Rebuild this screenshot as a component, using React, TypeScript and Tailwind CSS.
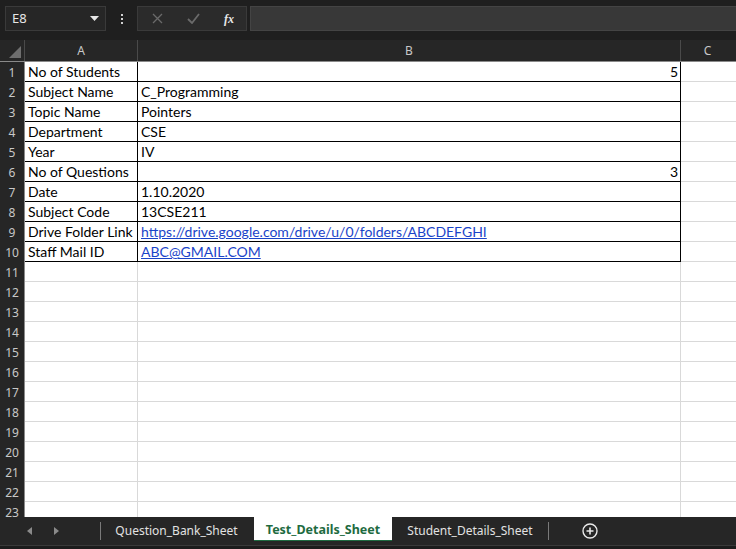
import React from 'react';

type Row = { a?: string; b?: string; num?: boolean; link?: boolean };

const data: Row[] = [
  { a: 'No of Students', b: '5', num: true },
  { a: 'Subject Name', b: 'C_Programming' },
  { a: 'Topic Name', b: 'Pointers' },
  { a: 'Department', b: 'CSE' },
  { a: 'Year', b: 'IV' },
  { a: 'No of Questions', b: '3', num: true },
  { a: 'Date', b: '1.10.2020' },
  { a: 'Subject Code', b: '13CSE211' },
  { a: 'Drive Folder Link', b: 'https://drive.google.com/drive/u/0/folders/ABCDEFGHI', link: true },
  { a: 'Staff Mail ID', b: 'ABC@GMAIL.COM', link: true },
];

const ui = { fontFamily: '"Noto Sans", "Open Sans", sans-serif' };
const cell = { fontFamily: 'Lato, "Noto Sans", sans-serif' };

const TopBar = () => (
  <div className="h-[40px] shrink-0 bg-[#1f1f1f] flex items-start pt-[6px] pl-[5px]">
    {/* name box */}
    <div className="w-[101px] h-[25px] bg-[#262626] border border-[#3a3a3a] flex items-center justify-between pl-[6px] pr-[6px]">
      <span className="text-[13px] text-[#e6e6e6]" style={ui}>E8</span>
      <svg width="9" height="5" viewBox="0 0 9 5"><path d="M0 0h9L4.5 5z" fill="#e6e6e6" /></svg>
    </div>
    {/* dots */}
    <div className="w-[31px] h-[25px] flex flex-col items-center justify-center gap-[2px]">
      <span className="w-[2px] h-[2px] bg-[#d0d0d0]" />
      <span className="w-[2px] h-[2px] bg-[#d0d0d0]" />
      <span className="w-[2px] h-[2px] bg-[#d0d0d0]" />
    </div>
    {/* formula buttons */}
    <div className="w-[110px] h-[25px] bg-[#2b2b2b] border border-[#3a3a3a] flex items-center">
      <div className="w-[37px] flex justify-center pl-[2px]">
        <svg width="11" height="11" viewBox="0 0 11 11"><path d="M1 1l9 9M10 1l-9 9" stroke="#6a6a6a" strokeWidth="1.3" /></svg>
      </div>
      <div className="w-[37px] flex justify-center">
        <svg width="13" height="11" viewBox="0 0 13 11"><path d="M1 6l4 4 7-9" stroke="#6a6a6a" strokeWidth="1.8" fill="none" /></svg>
      </div>
      <div className="w-[34px] flex justify-center">
        <span className="text-[12px] italic font-bold text-[#e8e8e8] leading-none" style={{ fontFamily: '"Liberation Serif", serif' }}>fx</span>
      </div>
    </div>
    {/* formula input */}
    <div className="ml-[3px] flex-1 h-[25px] bg-[#383838] border border-[#444444] border-r-0" />
  </div>
);

const ColHeader = () => (
  <div className="h-[22px] shrink-0 flex bg-[#262626] border-b border-[#8a8a8a] text-[12px] text-[#c8c8c8]" style={ui}>
    <div className="w-[25px] shrink-0 border-r border-[#4a4a4a] relative">
      <svg className="absolute right-[3px] bottom-[3px]" width="12" height="12" viewBox="0 0 12 12"><path d="M12 0v12H0z" fill="#6e6e6e" /></svg>
    </div>
    <div className="w-[113px] shrink-0 border-r border-[#4a4a4a] flex items-end justify-center pb-[1px]">A</div>
    <div className="w-[543px] shrink-0 border-r border-[#4a4a4a] flex items-end justify-center pb-[1px]">B</div>
    <div className="flex-1 flex items-end justify-center pb-[1px] pr-[2px]">C</div>
  </div>
);

const SheetRow = ({ n, r }: { n: number; r?: Row }) => {
  const t = !!r;
  return (
    <div className="h-[20px] shrink-0 flex text-[14px] leading-[19px]">
      <div className="w-[25px] shrink-0 bg-[#262626] border-r border-[#8a8a8a] text-[12px] text-[#c8c8c8] flex items-center justify-center" style={ui}>
        {n}
      </div>
      <div
        className={`w-[113px] shrink-0 bg-white border-r border-b pl-[3px] text-black whitespace-nowrap overflow-hidden ${t ? 'border-black' : 'border-[#d9d9d9]'}`}
        style={cell}
      >
        {r?.a}
      </div>
      <div
        className={`w-[543px] shrink-0 bg-white border-r border-b whitespace-nowrap overflow-hidden ${t ? 'border-black' : 'border-[#d9d9d9]'} ${r?.num ? 'text-right pr-[2px]' : 'pl-[3px]'}`}
        style={cell}
      >
        {r?.link ? <span className="text-[#1a44c9] underline">{r.b}</span> : <span className="text-black">{r?.b}</span>}
      </div>
      <div className="flex-1 bg-white border-b border-[#d9d9d9]" />
    </div>
  );
};

const TabBar = () => (
  <div className="h-[28px] shrink-0 bg-[#262626] flex items-start text-[12px]" style={ui}>
    <div className="w-[100px] h-[28px] shrink-0 flex items-center">
      <div className="w-[60px] flex justify-center gap-[22px] pl-[26px]">
        <svg width="5" height="8" viewBox="0 0 5 8"><path d="M5 0v8L0 4z" fill="#8a8a8a" /></svg>
        <svg width="5" height="8" viewBox="0 0 5 8"><path d="M0 0v8l5-4z" fill="#8a8a8a" /></svg>
      </div>
    </div>
    <div className="w-px h-[18px] mt-[5px] bg-[#7a7a7a]" />
    <div className="w-[153px] h-[28px] flex items-center justify-center text-[#e2e2e2] pr-[2px]">Question_Bank_Sheet</div>
    <div className="w-[138px] h-[24px] bg-white flex flex-col">
      <div className="flex-1 flex items-center justify-center font-bold text-[#1e6b41] pt-[4px] text-[12.5px]">Test_Details_Sheet</div>
      <div className="h-[2px] mb-[1px] bg-[#1e6b41]" />
    </div>
    <div className="w-[156px] h-[28px] flex items-center justify-center text-[#e2e2e2]">Student_Details_Sheet</div>
    <div className="w-px h-[18px] mt-[5px] bg-[#7a7a7a]" />
    <div className="ml-[33px] h-[28px] flex items-center">
      <svg width="16" height="16" viewBox="0 0 16 16">
        <circle cx="8" cy="8" r="7" stroke="#eaeaea" strokeWidth="1.4" fill="none" />
        <path d="M8 4.5v7M4.5 8h7" stroke="#eaeaea" strokeWidth="1.6" />
      </svg>
    </div>
  </div>
);

export default function App() {
  return (
    <div className="w-[736px] h-[549px] overflow-hidden flex flex-col bg-[#262626]">
      <TopBar />
      <ColHeader />
      <div className="h-[455px] shrink-0 flex flex-col overflow-hidden">
        {Array.from({ length: 23 }).map((_, i) => (
          <SheetRow key={i} n={i + 1} r={data[i]} />
        ))}
      </div>
      <TabBar />
      <div className="flex-1 bg-[#1c1c1c] border-t border-[#3a3a3a]" />
    </div>
  );
}
